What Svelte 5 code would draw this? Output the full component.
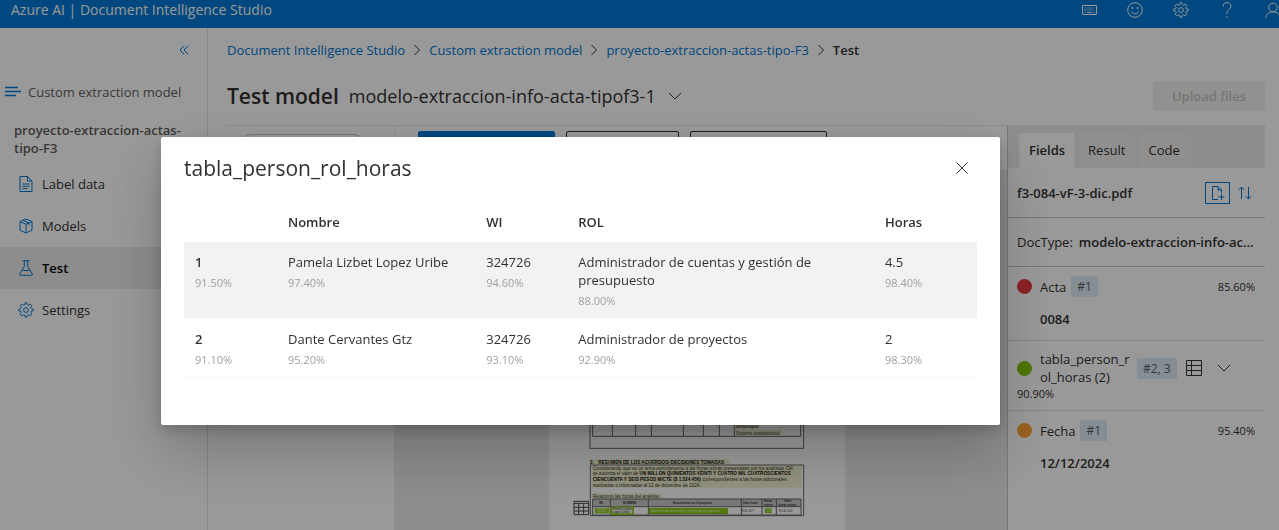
<script>
  const nav = [
    { label: 'Label data', icon: 'doc' },
    { label: 'Models', icon: 'cube' },
    { label: 'Test', icon: 'flask', active: true },
    { label: 'Settings', icon: 'gear' }
  ];
  const crumbs = ['Document Intelligence Studio', 'Custom extraction model', 'proyecto-extraccion-actas-tipo-F3'];
  const columns = ['Nombre', 'WI', 'ROL', 'Horas'];
  const rows = [
    {
      id: '1',
      conf: '91.50%',
      cells: [
        ['Pamela Lizbet Lopez Uribe', '97.40%'],
        ['324726', '94.60%'],
        ['Administrador de cuentas y gestión de presupuesto', '88.00%'],
        ['4.5', '98.40%']
      ]
    },
    {
      id: '2',
      conf: '91.10%',
      cells: [
        ['Dante Cervantes Gtz', '95.20%'],
        ['324726', '93.10%'],
        ['Administrador de proyectos', '92.90%'],
        ['2', '98.30%']
      ]
    }
  ];
</script>

{#snippet gear()}
  <svg width="16" height="16" viewBox="0 0 16 16" aria-hidden="true">
    <circle cx="8" cy="8" r="2.4" />
    <path d="M6.700 2.800L7.200.7h1.600l.5 2.100 1.100.5 1.900-1.200 1.600 1.600-1.200 1.900.5 1.100 2.100.5v1.600l-2.100.5-.5 1.100 1.200 1.900-1.600 1.600-1.900-1.200-1.100.5-.5 2.100H7.200l-.5-2.100-1.100-.5-1.900 1.200-1.600-1.600 1.200-1.900-.5-1.100L.7 8.800V7.200l2.100-.5.5-1.100-1.200-1.900 1.600-1.600 1.900 1.200z" />
  </svg>
{/snippet}

{#snippet chevron()}
  <svg width="14" height="14" viewBox="0 0 14 14" aria-hidden="true"><path d="M1 4l6 6 6-6" /></svg>
{/snippet}

<div class="app">
  <header>
    <span class="brand">Azure AI | Document Intelligence Studio</span>
    <div class="tools">
      <button aria-label="Keyboard">
        <svg width="16" height="16" viewBox="0 0 16 16">
          <rect x="1.500" y="3.500" width="14" height="9" rx=".5" />
          <path d="M3.500 6h10M3.500 8h10" stroke-dasharray="1 1" />
          <path d="M3.500 10.300h1.200M6 10.300h5M12.500 10.300h1.200" />
        </svg>
      </button>
      <button aria-label="Feedback">
        <svg width="16" height="16" viewBox="0 0 16 16">
          <circle cx="8" cy="8" r="7.300" />
          <path d="M4.300 9.500c.8 1.500 2 2.300 3.700 2.300s2.900-.8 3.700-2.300" />
          <circle class="solid" cx="5.500" cy="6" r=".6" /><circle class="solid" cx="10.500" cy="6" r=".6" />
        </svg>
      </button>
      <button aria-label="Settings">{@render gear()}</button>
      <button aria-label="Help">
        <svg width="16" height="16" viewBox="0 0 16 16">
          <path d="M4.300 4.300C4.300 2 5.800.6 8 .6s3.900 1.400 3.900 3.500c0 1.600-.9 2.400-2 3.400S8 9.200 8 10.700V12M8 14v1.500" />
        </svg>
      </button>
      <button aria-label="Account">
        <svg width="16" height="16" viewBox="0 0 16 16">
          <circle cx="8" cy="5.500" r="4.300" /><path d="M1 16c.3-3.500 2.500-6.200 7-6.200s6.700 2.700 7 6.200" />
        </svg>
      </button>
    </div>
  </header>

  <div class="body">
    <nav>
      <button class="collapse" aria-label="Collapse">
        <svg width="10" height="10" viewBox="0 0 10 10"><path d="M5 .8L1 5l4 4.200M9 .8L5 5l4 4.200" /></svg>
      </button>
      <div class="kind">
        <svg width="16" height="12" viewBox="0 0 16 12"><path d="M0 1.500h13M0 5.500h16M0 9.500h11" /></svg>
        Custom extraction model
      </div>
      <div class="project">proyecto-extraccion-actas-tipo-F3</div>
      {#each nav as n}
        <a href="#{n.icon}" class:active={n.active}>
          {#if n.icon === 'doc'}
            <svg width="16" height="16" viewBox="0 0 16 16"><path d="M2 .5h7.500L14 5v10.500H2zM9.500.5V5H14M4.500 8h7M4.500 10.300h7M4.500 12.600h5" /></svg>
          {:else if n.icon === 'cube'}
            <svg width="16" height="16" viewBox="0 0 16 16"><path d="M8 1l6 2.500v8.700L8 15l-6-2.800V3.500zM2 3.500L8 6.300l6-2.800M8 6.300V15M5 2.300l6 2.700v2.500" /></svg>
          {:else if n.icon === 'flask'}
            <svg width="16" height="16" viewBox="0 0 16 16"><path d="M4.500.7h7M6.300.7v5.600L1.700 14q-.4 1.300 1 1.300h10.600q1.400 0 1-1.300L9.700 6.300V.7M4.500 10.500h7" /></svg>
          {:else}
            {@render gear()}
          {/if}
          {n.label}
        </a>
      {/each}
    </nav>

    <main>
      <div class="crumbs">
        {#each crumbs as c}
          <a href="#top">{c}</a>
          <svg width="8" height="12" viewBox="0 0 8 12"><path d="M1.500 1l5 5-5 5" /></svg>
        {/each}
        <b>Test</b>
      </div>
      <div class="title">
        <h1>Test model</h1>
        <button class="model">modelo-extraccion-info-acta-tipof3-1 {@render chevron()}</button>
        <button class="upload" disabled>Upload files</button>
      </div>

      <div class="work">
        <div class="thumbs"><div class="thumb"></div></div>
        <div class="viewer">
          <div class="actions">
            <button class="primary" aria-label="Run analysis"></button>
            <button class="range" aria-label="Query fields"></button>
            <button aria-label="Analyze options"></button>
          </div>
          <div class="canvas">
            <svg class="page" viewBox="0 0 888 1095" width="296" height="365">
              <rect class="paper" width="888" height="1095" />
              <path class="rule" d="M123 300V835H764V300M131 300V799H755V300M190 300V799M260 300V799M307 300V799M403 300V799M463 300V799M511 300V799M556 300V799" />
              <g class="mark">
                <rect x="558" y="758" width="72" height="18" /><rect x="558" y="780" width="142" height="17" />
                <rect x="123" y="868" width="420" height="16" />
                <rect x="130" y="887" width="628" height="66" />
                <rect x="130" y="970" width="212" height="16" />
              </g>
              <g class="print">
                <text x="561" y="773">despliegue</text>
                <text x="561" y="795">Soporte postsolicitud</text>
                <text class="bold" x="123" y="882">2.</text>
                <text class="bold" x="148" y="882">RESUMEN DE LOS ACUERDOS/ DECISIONES TOMADAS</text>
                <text x="131" y="899">Considerando que es un tema estrictamente a las horas extras presentadas por los analistas CM,</text>
                <text x="131" y="916">se autoriza el valor de <tspan class="bold">UN MILLON QUINIENTOS VEINTI Y CUATRO MIL CUATROSCIENTOS</tspan></text>
                <text x="131" y="933"><tspan class="bold">CIENCUENTA Y SEIS PESOS M/CTE ($ 1.524.456)</tspan> correspondientes a las horas adicionales</text>
                <text x="131" y="950">realizadas o informadas al 12 de diciembre de 2024.</text>
                <text x="131" y="983">Relaciono las horas del analista:</text>
              </g>
              <rect class="head" x="131" y="987" width="625" height="23" />
              <path class="rule" d="M764 885H124V1037H764zM131 987H756V1035H131zM131 1010H756M184 987V1035M298 987V1035M577 987V1035M639 987V1035M682 987V1035" />
              <g class="hit">
                <rect x="137" y="1015" width="43" height="15" /><rect x="184" y="1009" width="71" height="26" />
                <rect x="299" y="1014" width="238" height="18" /><rect x="648" y="1015" width="20" height="14" />
              </g>
              <rect class="inner" x="190" y="1013" width="60" height="17" />
              <g class="tiny">
                <text class="bold" x="151" y="1002">WI</text>
                <text class="bold" x="222" y="1002">NOMBRE</text>
                <text class="bold" x="371" y="1002">Documentos en el proyecto</text>
                <text class="bold" x="581" y="1002">Valor hora</text>
                <text class="bold" x="645" y="997">Horas</text><text class="bold" x="645" y="1007">extras</text>
                <text class="bold" x="705" y="997">Valor</text><text class="bold" x="688" y="1007">horas extras</text>
                <text class="pale" x="143" y="1026">324726</text>
                <text x="192" y="1021">Pamela Lizbet</text><text x="192" y="1029">Lopez Uribe</text>
                <text class="pale" x="306" y="1026">Administrador de cuentas y gestión de presupuesto</text>
                <text x="579" y="1026">$ 81.027</text>
                <text class="pale" x="653" y="1025">4.5</text>
                <text x="690" y="1026">$ 145.102</text>
              </g>
              <path class="grid" d="M75 994h44v40H75zM75 1000h44M75 1012h44M75 1023h44M89 1000v34M104 1000v34" />
            </svg>
          </div>
        </div>

        <aside>
          <div class="tabs">
            <button class="on">Fields</button><button>Result</button><button>Code</button>
          </div>
          <div class="line file">
            <b>f3-084-vF-3-dic.pdf</b>
            <button class="add" aria-label="Add page">
              <svg width="16" height="16" viewBox="0 0 16 16"><path d="M8 14.500H2.500v-13H8l3.500 3.500v3M8 1.500V5h3.500M11.500 9v6M8.500 12h6" /></svg>
            </button>
            <button class="sort" aria-label="Sort">
              <svg width="14" height="14" viewBox="0 0 14 14"><path d="M3.500 13V1M.8 3.800L3.500 1l2.700 2.800M10.500 1v12M7.800 10.200l2.700 2.800 2.700-2.800" /></svg>
            </button>
          </div>
          <div class="line type"><span>DocType:</span><b>modelo-extraccion-info-acta-tipof3-1</b></div>
          <div class="field">
            <div class="top"><i class="dot red"></i><span>Acta</span><em>#1</em><small>85.60%</small></div>
            <b>0084</b>
          </div>
          <div class="field table">
            <div class="top">
              <i class="dot green"></i><span class="name">tabla_person_rol_horas (2)</span><em>#2, 3</em>
              <button aria-label="Open table">
                <svg width="16" height="16" viewBox="0 0 16 16"><path d="M.5.5h15v15H.5zM.5 5.500h15M.5 10.500h15M5.500.5v15" /></svg>
              </button>
              <button aria-label="Expand">{@render chevron()}</button>
            </div>
            <small>90.90%</small>
          </div>
          <div class="field last">
            <div class="top"><i class="dot orange"></i><span>Fecha</span><em>#1</em><small>95.40%</small></div>
            <b>12/12/2024</b>
          </div>
        </aside>
      </div>
    </main>
  </div>

  <div class="overlay">
    <div class="dialog" role="dialog" aria-modal="true" aria-labelledby="dlg-title">
      <div class="dlg-head">
        <h2 id="dlg-title">tabla_person_rol_horas</h2>
        <button aria-label="Close">
          <svg width="12" height="12" viewBox="0 0 12 12"><path d="M.4.4l11.200 11.200M11.600.4L.4 11.600" /></svg>
        </button>
      </div>
      <table>
        <colgroup><col class="c0" /><col class="c1" /><col class="c2" /><col class="c3" /><col class="c4" /></colgroup>
        <thead>
          <tr><th></th>{#each columns as c}<th>{c}</th>{/each}</tr>
        </thead>
        <tbody>
          {#each rows as r}
            <tr>
              <td><strong>{r.id}</strong><small>{r.conf}</small></td>
              {#each r.cells as [value, conf]}
                <td><span>{value}</span><small>{conf}</small></td>
              {/each}
            </tr>
          {/each}
        </tbody>
      </table>
    </div>
  </div>
</div>

<style>
  :global(body) { margin: 0; overflow: hidden; }
  .app {
    display: flex; flex-direction: column; height: 100vh; overflow: hidden;
    background: #fff; color: #323130;
    font: 13px/18px "Open Sans", "Noto Sans", sans-serif;
  }
  .app * { box-sizing: border-box; }
  button { font: inherit; color: inherit; background: none; border: 0; padding: 0; display: inline-flex; align-items: center; justify-content: center; }
  a { color: #0078d4; text-decoration: none; }
  b, strong { font-weight: 600; }
  svg { fill: none; stroke: currentColor; stroke-width: 1; flex: none; }
  .solid { fill: currentColor; }

  header { flex: none; height: 28px; padding-bottom: 8px; background: #0078d4; color: #fff; display: flex; align-items: center; justify-content: space-between; overflow: hidden; }
  .brand { padding-left: 11px; font-size: 14px; white-space: nowrap; }
  .tools { display: flex; gap: 30px; margin-right: -2px; }

  .body { flex: 1; display: flex; min-height: 0; }
  nav { flex: none; width: 208px; display: flex; flex-direction: column; border-right: 1px solid #e1dfdd; }
  .collapse { align-self: flex-end; margin: 17px 18px 0 0; color: #0078d4; }
  .kind { display: flex; align-items: center; gap: 7px; padding: 28px 0 0 5px; color: #605e5c; white-space: nowrap; }
  .kind svg { color: #0078d4; stroke-width: 1.5; }
  .project { padding: 20px 24px 6px 14px; font-weight: 600; color: #605e5c; line-height: 18px; }
  nav a { display: flex; align-items: center; gap: 8px; height: 42px; padding-left: 18px; color: #323130; }
  nav a svg { color: #0078d4; }
  nav a.active { background: #edebe9; font-weight: 600; color: #000; }

  main { flex: 1; min-width: 0; display: flex; flex-direction: column; padding: 13px 14px 0 19px; }
  .crumbs { display: flex; align-items: center; gap: 8px; white-space: nowrap; }
  .title { display: flex; align-items: center; height: 66px; padding-top: 8px; }
  h1 { margin: 0; font-size: 21px; line-height: 28px; font-weight: 600; }
  .model { font-size: 18px; gap: 12px; margin-left: 10px; }
  .upload { margin-left: auto; width: 112px; height: 30px; background: #f3f2f1; color: #c8c6c4; font-weight: 600; }

  .work { flex: 1; display: flex; min-height: 0; }
  .thumbs { flex: none; width: 168px; border: 1px solid #edebe9; border-width: 1px 1px 0 0; padding: 8px 32px 0 16px; }
  .thumb { height: 40px; border: 1px solid #c8c6c4; border-radius: 8px; }
  .viewer { flex: 1; min-width: 0; display: flex; flex-direction: column; border-top: 1px solid #edebe9; }
  .actions { display: flex; gap: 11px; height: 44px; padding: 5px 23px 7px; }
  .actions button { border: 1px solid #323130; border-radius: 2px; width: 137px; }
  .actions .range { width: 113px; }
  .actions .primary { background: #0078d4; border-color: #0078d4; }
  .canvas { flex: 1; min-height: 0; display: flex; justify-content: center; padding-right: 8px; background: #edebe9; overflow: hidden; }
  .paper { fill: #fff; stroke: none; }
  .rule { stroke: #666; stroke-width: 3; }
  .mark { fill: #f4f2cf; stroke: none; }
  .head { fill: #c8c8c8; stroke: none; }
  .hit { fill: #86c81a; stroke: none; }
  .inner { fill: #eef3dc; stroke: none; }
  .print text, .tiny text { font-family: "Liberation Sans", Arial, sans-serif; font-size: 14px; fill: #333; stroke: none; }
  .print .bold { font-weight: 700; fill: #111; font-size: 14px; }
  .tiny text { font-size: 9px; }
  .tiny .bold { font-weight: 700; }
  .tiny .pale { fill: #eef8d8; }
  .grid { stroke: #444; stroke-width: 3; }

  aside { flex: none; width: 258px; border-left: 1px solid #c8c6c4; }
  .tabs { display: flex; gap: 3px; height: 43px; padding: 8px 11px 0; background: #edebe9; }
  .tabs button { padding: 0 10px 1px; background: #f1efed; border-radius: 3px 3px 0 0; }
  .tabs .on { background: #fff; font-weight: 600; }
  .line { display: flex; align-items: center; height: 50px; padding: 0 13px 0 9px; border-bottom: 1px solid #c8c6c4; }
  .add { margin-left: auto; width: 25px; height: 22px; border: 1px solid #0078d4; color: #0078d4; }
  .sort { margin-left: 8px; color: #0078d4; }
  .type { height: 49px; gap: 6px; padding-right: 10px; }
  .type b { overflow: hidden; text-overflow: ellipsis; white-space: nowrap; }
  .field { padding: 9px 10px 12px 9px; border-bottom: 1px solid #e1dfdd; }
  .field > b { display: block; padding: 13px 0 0 23px; }
  .last { border: 0; }
  .top { display: flex; align-items: center; }
  .dot { flex: none; width: 15px; height: 15px; border-radius: 50%; margin-right: 8px; }
  .red { background: #e8383d; }
  .green { background: #84c40a; }
  .orange { background: #ffa535; }
  em { font-style: normal; font-size: 12px; line-height: 21px; padding: 0 6px; margin-left: 5px; background: #deecf9; color: #605e5c; }
  small { font-size: 11px; line-height: 15px; }
  .top small { margin-left: auto; }
  .name { width: 92px; word-break: break-all; }
  .table { padding-bottom: 9px; }
  .table em { white-space: nowrap; }
  .table button { margin-left: 9px; }
  .table button + button { margin-left: 15px; }
  .table small { display: block; }

  .overlay { position: fixed; inset: 0; background: rgba(0, 0, 0, 0.4); padding: 137px 279px 0 161px; }
  .dialog { background: #fff; border-radius: 2px; padding: 19px 23px 47px; box-shadow: 0 26px 58px rgba(0, 0, 0, 0.22), 0 5px 14px rgba(0, 0, 0, 0.18); }
  .dlg-head { display: flex; align-items: center; justify-content: space-between; padding-right: 9px; }
  h2 { margin: 0; font-size: 21px; line-height: 24px; font-weight: 400; }
  table { width: 100%; margin-top: 23px; border-collapse: collapse; table-layout: fixed; }
  .c0 { width: 93px; } .c1 { width: 25%; } .c2 { width: 92px; } .c4 { width: 13%; }
  th { height: 39px; padding: 0 11px 2px; text-align: left; font-weight: 600; }
  td { padding: 11px 11px 10px; vertical-align: top; }
  td span, td strong, td small { display: block; }
  td span { max-width: 240px; }
  td small { margin-top: 4px; color: #a19f9d; }
  tbody tr { border-bottom: 1px solid #faf9f8; }
  tbody tr:first-child { background: #f3f2f1; }
</style>
